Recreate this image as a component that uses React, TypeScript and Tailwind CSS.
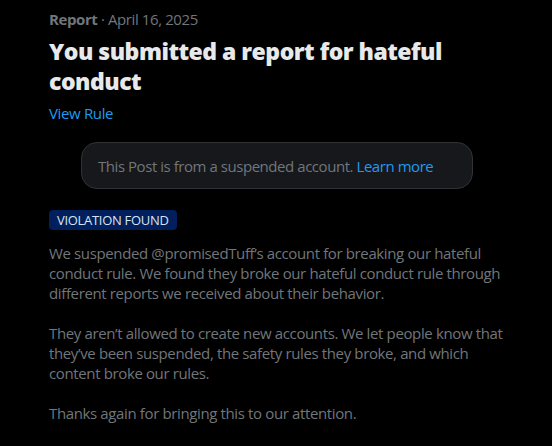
export default function App() {
  return (
    <div className="min-h-screen bg-black font-['Open_Sans',sans-serif]">
      <div className="w-[456px] pl-[49px] pt-[9px] box-content">
        <p className="text-[15px] leading-[20px] tracking-[-0.4px] text-[#71767b]">
          <span className="font-bold">Report</span> · April 16, 2025
        </p>
        <h1 className="mt-[7px] text-[23px] leading-[30px] font-extrabold tracking-[-0.5px] text-[#e7e9ea]">
          You submitted a report for hateful conduct
        </h1>
        <a className="mt-[7px] block text-[15px] leading-[20px] tracking-[-0.35px] text-[#1d9bf0]">View Rule</a>
        <div className="mx-8 mt-[19px] flex h-[47px] items-center rounded-2xl border border-[#2f3336] bg-[#16181c] px-4 pt-px text-[15px] tracking-[-0.45px] text-[#71767b]">
          <p>
            This Post is from a suspended account. <a className="text-[#1d9bf0]">Learn more</a>
          </p>
        </div>
        <span className="mt-[21px] inline-block rounded bg-[#001f5c] px-2 text-[13px] leading-[20px] tracking-[-0.3px] text-[#d6e4f5]">
          VIOLATION FOUND
        </span>
        <div className="mt-[12px] flex flex-col gap-5 text-[15px] leading-[20px] tracking-[-0.37px] text-[#71767b]">
          <p>
            We suspended @promisedTuff’s account for breaking our hateful conduct rule. We found they broke our hateful
            conduct rule through different reports we received about their behavior.
          </p>
          <p>
            They aren’t allowed to create new accounts. We let people know that they’ve been suspended, the safety rules
            they broke, and which content broke our rules.
          </p>
          <p>Thanks again for bringing this to our attention.</p>
        </div>
      </div>
    </div>
  );
}
